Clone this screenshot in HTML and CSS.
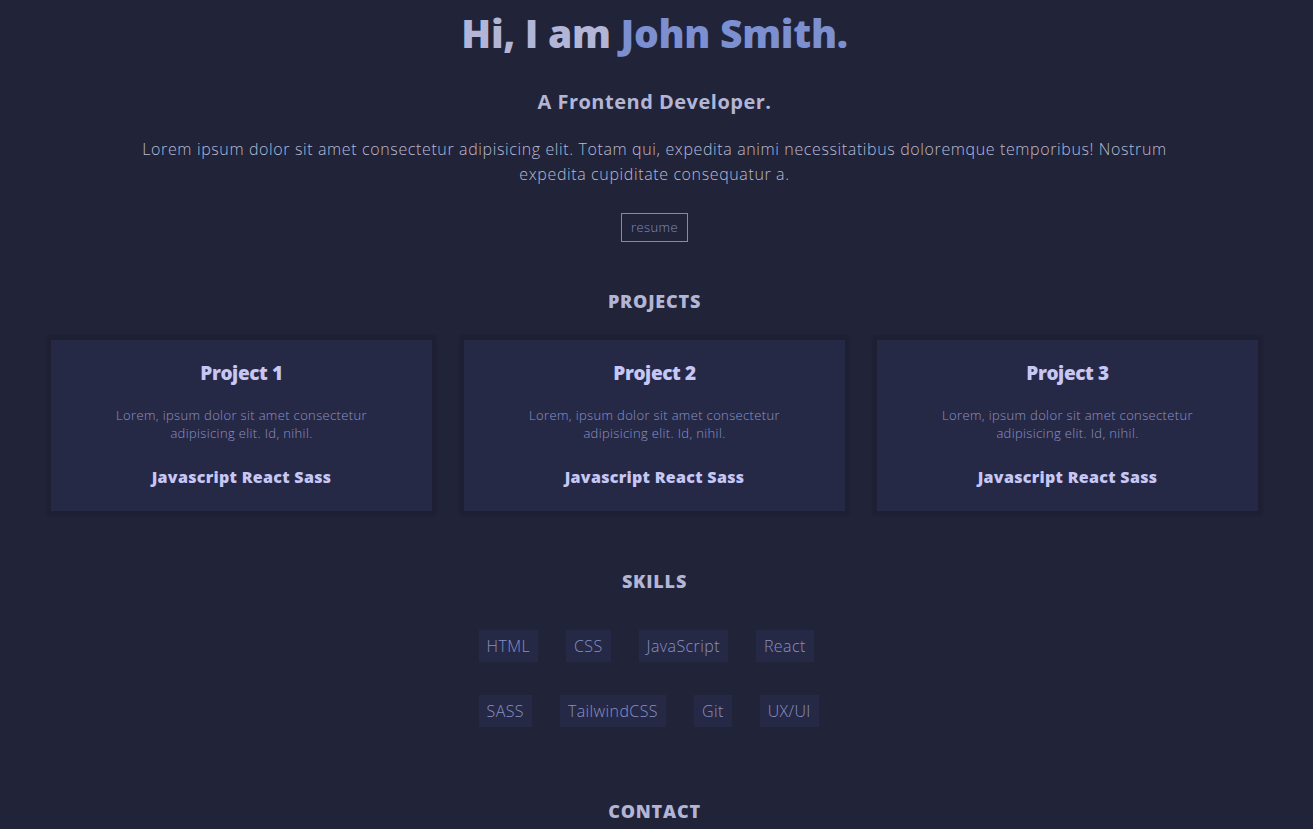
FILE: index.html
```html
<!DOCTYPE html>
<html lang="en">
<head>
<meta charset="utf-8">
<title>John Smith</title>
<link rel="stylesheet" href="styles.css">
</head>
<body>
<main class="page">
  <section class="hero">
    <h1 class="hero-title">Hi, I am <span class="accent">John Smith.</span></h1>
    <h2 class="hero-sub">A Frontend Developer.</h2>
    <p class="hero-text">Lorem ipsum dolor sit amet consectetur adipisicing elit. Totam qui, expedita animi necessitatibus doloremque temporibus! Nostrum expedita cupiditate consequatur a.</p>
    <a class="resume-btn" href="#">resume</a>
  </section>

  <section class="projects">
    <h3 class="section-title">PROJECTS</h3>
    <div class="cards">
      <article class="card">
        <h4 class="card-title">Project 1</h4>
        <p class="card-text">Lorem, ipsum dolor sit amet consectetur adipisicing elit. Id, nihil.</p>
        <p class="card-tags">Javascript React Sass</p>
      </article>
      <article class="card">
        <h4 class="card-title">Project 2</h4>
        <p class="card-text">Lorem, ipsum dolor sit amet consectetur adipisicing elit. Id, nihil.</p>
        <p class="card-tags">Javascript React Sass</p>
      </article>
      <article class="card">
        <h4 class="card-title">Project 3</h4>
        <p class="card-text">Lorem, ipsum dolor sit amet consectetur adipisicing elit. Id, nihil.</p>
        <p class="card-tags">Javascript React Sass</p>
      </article>
    </div>
  </section>

  <section class="skills">
    <h3 class="section-title">SKILLS</h3>
    <div class="chips">
      <span class="chip">HTML</span>
      <span class="chip">CSS</span>
      <span class="chip">JavaScript</span>
      <span class="chip">React</span>
      <span class="chip">SASS</span>
      <span class="chip">TailwindCSS</span>
      <span class="chip">Git</span>
      <span class="chip">UX/UI</span>
    </div>
  </section>

  <section class="contact">
    <h3 class="section-title">CONTACT</h3>
  </section>
</main>
</body>
</html>
```

FILE: styles.css
```css
* { box-sizing: border-box; }
html, body {
  margin: 0;
  padding: 0;
  background: #212338;
}
body {
  font-family: "Open Sans", "Noto Sans", sans-serif;
  color: #b3b5d6;
}
.page {
  padding: 9px 4px 0 0;
  text-align: center;
}
.hero {
  display: flex;
  flex-direction: column;
  align-items: center;
}
.hero-title {
  margin: 0;
  font-size: 39px;
  line-height: 48px;
  font-weight: 800;
  color: #b3b5d6;
  letter-spacing: -0.3px;
}
.accent { color: #7b8fd1; }
.hero-sub {
  margin: 30px 0 0;
  font-size: 20px;
  line-height: 30px;
  font-weight: 700;
  letter-spacing: 0.5px;
  color: #b3b5d6;
}
.hero-text {
  margin: 20px 0 0;
  max-width: 1045px;
  font-size: 16px;
  line-height: 25px;
  font-weight: 300;
  letter-spacing: 0.62px;
  color: #b8bad6;
}
.resume-btn {
  margin-top: 26px;
  display: inline-block;
  padding: 4px 9px;
  font-size: 13px;
  line-height: 19px;
  font-weight: 300;
  letter-spacing: 0.4px;
  color: #7f8ccc;
  border: 1px solid #7a88d2;
  text-decoration: none;
}
.section-title {
  margin: 0;
  font-size: 18px;
  line-height: 27px;
  font-weight: 800;
  letter-spacing: 0.8px;
  color: #b3b5d6;
}
.projects { margin-top: 46px; }
.cards {
  width: 1207px;
  margin: 25px auto 0;
  display: grid;
  grid-template-columns: repeat(3, 1fr);
  gap: 32px;
}
.card {
  background: #262946;
  box-shadow: 0 0 2px 4px rgba(26, 27, 44, 0.45);
  padding: 18px 20px 22px;
  height: 171px;
}
.card-title {
  margin: 0;
  font-size: 19px;
  line-height: 30px;
  font-weight: 800;
  letter-spacing: -0.4px;
  color: #c6c7f5;
}
.card-text {
  margin: 18px auto 0;
  max-width: 270px;
  font-size: 13px;
  line-height: 18px;
  font-weight: 300;
  letter-spacing: 0.35px;
  color: #8d93c6;
}
.card-tags {
  margin: 23px 0 0;
  font-size: 16px;
  line-height: 24px;
  font-weight: 800;
  letter-spacing: 0.3px;
  color: #c6c7f5;
}
.skills { margin-top: 57px; }
.chips {
  width: 352px;
  margin: 35px auto 0;
  display: flex;
  flex-wrap: wrap;
  column-gap: 28px;
  row-gap: 33px;
}
.chip {
  display: inline-block;
  padding: 0 8px;
  height: 32px;
  line-height: 32px;
  font-size: 16px;
  font-weight: 300;
  letter-spacing: 0.4px;
  background: #262945;
  color: #8690c6;
}
.contact { margin-top: 71px; }
```
